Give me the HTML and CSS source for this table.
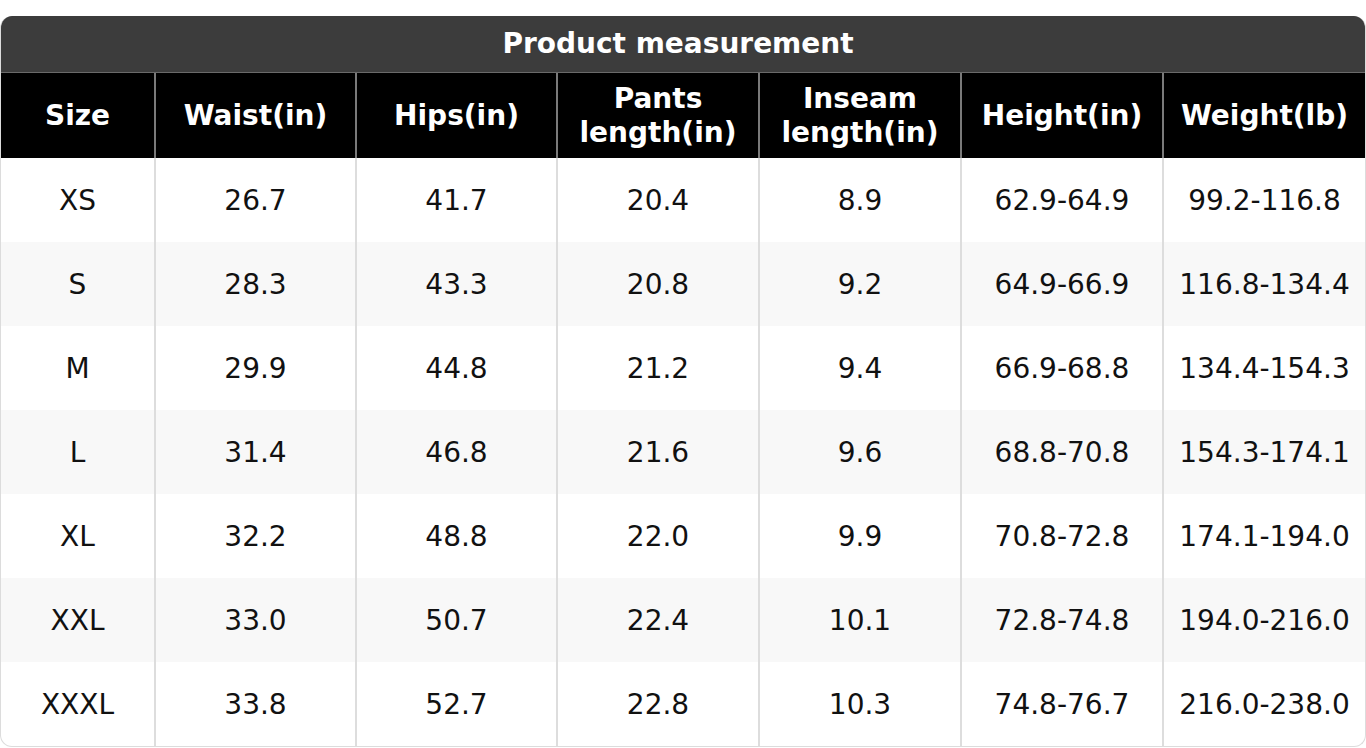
FILE: index.html
```html
<!DOCTYPE html>
<html>
<head>
<meta charset="utf-8">
<link rel="stylesheet" href="styles.css">
</head>
<body>
<div class="chart">
  <div class="title">Product measurement</div>
  <table class="sizes">
    <colgroup>
      <col class="c-size"><col class="c-std"><col class="c-std"><col class="c-wide"><col class="c-wide"><col class="c-wide"><col>
    </colgroup>
    <thead>
      <tr>
        <th>Size</th><th>Waist(in)</th><th>Hips(in)</th><th>Pants<br>length(in)</th><th>Inseam<br>length(in)</th><th>Height(in)</th><th>Weight(lb)</th>
      </tr>
    </thead>
    <tbody>
      <tr><td>XS</td><td>26.7</td><td>41.7</td><td>20.4</td><td>8.9</td><td>62.9-64.9</td><td>99.2-116.8</td></tr>
      <tr><td>S</td><td>28.3</td><td>43.3</td><td>20.8</td><td>9.2</td><td>64.9-66.9</td><td>116.8-134.4</td></tr>
      <tr><td>M</td><td>29.9</td><td>44.8</td><td>21.2</td><td>9.4</td><td>66.9-68.8</td><td>134.4-154.3</td></tr>
      <tr><td>L</td><td>31.4</td><td>46.8</td><td>21.6</td><td>9.6</td><td>68.8-70.8</td><td>154.3-174.1</td></tr>
      <tr><td>XL</td><td>32.2</td><td>48.8</td><td>22.0</td><td>9.9</td><td>70.8-72.8</td><td>174.1-194.0</td></tr>
      <tr><td>XXL</td><td>33.0</td><td>50.7</td><td>22.4</td><td>10.1</td><td>72.8-74.8</td><td>194.0-216.0</td></tr>
      <tr><td>XXXL</td><td>33.8</td><td>52.7</td><td>22.8</td><td>10.3</td><td>74.8-76.7</td><td>216.0-238.0</td></tr>
    </tbody>
  </table>
</div>
</body>
</html>
```
FILE: styles.css
```css
html, body {
  margin: 0;
  padding: 0;
  background: #ffffff;
}
body {
  font-family: "DejaVu Sans", "Liberation Sans", sans-serif;
  color: #111111;
}
.chart {
  margin-top: 16px;
  width: 1366px;
  box-sizing: border-box;
  border-radius: 12px;
  overflow: hidden;
  border: 1px solid #dcdcdc;
  border-top: none;
}
.title {
  height: 57px;
  box-sizing: border-box;
  padding-right: 10px;
  background: #3c3c3c;
  color: #ffffff;
  font-weight: bold;
  font-size: 28px;
  line-height: 56px;
  text-align: center;
  border-bottom: 1px solid #6a6a6a;
}
.sizes {
  width: 100%;
  table-layout: fixed;
  border-collapse: separate;
  border-spacing: 0;
}
.c-size { width: 153px; }
.c-std { width: 201px; }
.c-wide { width: 202px; }
.sizes th,
.sizes td {
  box-sizing: border-box;
  text-align: center;
  padding: 0;
  border-left: 2px solid #dddddd;
}
.sizes th:first-child,
.sizes td:first-child {
  border-left: none;
}
.sizes th {
  height: 85px;
  padding-top: 1px;
  background: #000000;
  color: #ffffff;
  font-weight: bold;
  font-size: 28px;
  line-height: 34px;
  border-left-color: #7a7a7a;
}
.sizes td {
  height: 84px;
  font-size: 28px;
  color: #111111;
}
.sizes tbody tr:nth-child(even) td {
  background: #f8f8f8;
}
```
